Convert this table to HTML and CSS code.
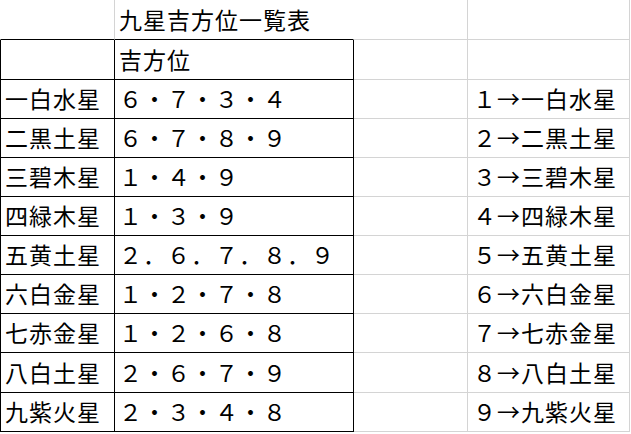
FILE: index.html
```html
<!DOCTYPE html>
<html lang="ja">
<head>
<meta charset="utf-8">
<title>九星吉方位一覧表</title>
<link rel="stylesheet" href="styles.css">
</head>
<body>
<div class="sheet">
  <div class="cell a r1 top"></div>
  <div class="cell b r1 top">九星吉方位一覧表</div>
  <div class="cell c r1"></div>
  <div class="cell d r1"></div>

  <div class="cell a t r2"></div>
  <div class="cell b t r2">吉方位</div>
  <div class="cell c r2"></div>
  <div class="cell d r2"></div>

  <div class="cell a t">一白水星</div>
  <div class="cell b t">６・７・３・４</div>
  <div class="cell c"></div>
  <div class="cell d">１→一白水星</div>

  <div class="cell a t">二黒土星</div>
  <div class="cell b t">６・７・８・９</div>
  <div class="cell c"></div>
  <div class="cell d">２→二黒土星</div>

  <div class="cell a t">三碧木星</div>
  <div class="cell b t">１・４・９</div>
  <div class="cell c"></div>
  <div class="cell d">３→三碧木星</div>

  <div class="cell a t">四緑木星</div>
  <div class="cell b t">１・３・９</div>
  <div class="cell c"></div>
  <div class="cell d">４→四緑木星</div>

  <div class="cell a t">五黄土星</div>
  <div class="cell b t">２．６．７．８．９</div>
  <div class="cell c"></div>
  <div class="cell d">５→五黄土星</div>

  <div class="cell a t">六白金星</div>
  <div class="cell b t">１・２・７・８</div>
  <div class="cell c"></div>
  <div class="cell d">６→六白金星</div>

  <div class="cell a t">七赤金星</div>
  <div class="cell b t">１・２・６・８</div>
  <div class="cell c"></div>
  <div class="cell d">７→七赤金星</div>

  <div class="cell a t r9">八白土星</div>
  <div class="cell b t r9">２・６・７・９</div>
  <div class="cell c r9"></div>
  <div class="cell d r9">８→八白土星</div>

  <div class="cell a t">九紫火星</div>
  <div class="cell b t">２・３・４・８</div>
  <div class="cell c"></div>
  <div class="cell d">９→九紫火星</div>
</div>
</body>
</html>
```
FILE: styles.css
```css
html, body {
  margin: 0;
  padding: 0;
  background: #ffffff;
}

.sheet {
  display: grid;
  grid-template-columns: 115px 239px 114px 162px;
  font-family: "Noto Sans CJK JP", "Noto Sans", sans-serif;
  font-size: 23px;
  letter-spacing: 1px;
  color: #000000;
}

.cell {
  box-sizing: border-box;
  height: 39px;
  display: flex;
  align-items: center;
  white-space: nowrap;
  border-right: 1px solid #d4d4d4;
  border-bottom: 1px solid #d4d4d4;
  padding-left: 4px;
  line-height: 1;
  padding-bottom: 1px;
}

.r1, .r2, .r9 {
  height: 40px;
}

.a {
  border-left: 1px solid transparent;
}

.a.t {
  border-left-color: #000000;
  border-right-color: #000000;
  border-bottom-color: #000000;
}

.b.t {
  border-right-color: #000000;
  border-bottom-color: #000000;
}

.top {
  border-bottom-color: #000000;
}

.b.top {
  border-right-color: transparent;
}

.d {
  padding-left: 5px;
}
```
